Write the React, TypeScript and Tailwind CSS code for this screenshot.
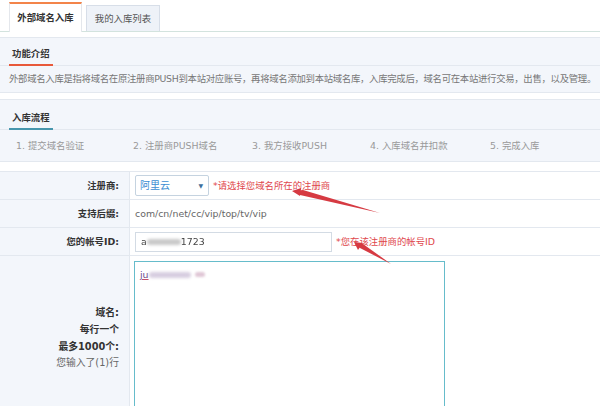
import React from "react";

const FONT = "font-['DejaVu_Sans','Noto_Sans_CJK_SC',sans-serif]";

export default function App() {
  const steps = [
    { t: "1. 提交域名验证", w: "w-[117px]" },
    { t: "2. 注册商PUSH域名", w: "w-[119px]" },
    { t: "3. 我方接收PUSH", w: "w-[118px]" },
    { t: "4. 入库域名并扣款", w: "w-[120px]" },
    { t: "5. 完成入库", w: "w-[100px]" },
  ];
  return (
    <div className={`relative w-[600px] h-[406px] overflow-hidden bg-white text-[9.4px] leading-none text-[#555] ${FONT}`}>
      {/* tabs */}
      <div className="h-[32px] border-b border-[#d3e3de] bg-white flex items-end pl-[9px] gap-[4px] pt-[2px]">
        <div className="h-[30px] w-[73px] -mb-px bg-white border-t-2 border-t-[#f3844a] border-x border-x-[#e4e7ec] flex items-center justify-center text-[#333] font-semibold">
          外部域名入库
        </div>
        <div className="h-[26px] w-[74px] mb-0 bg-[#eef2f8] border border-[#d7dee8] border-b-0 flex items-center justify-center text-[#555]">
          我的入库列表
        </div>
      </div>

      {/* 功能介绍 */}
      <div className="mt-[5px] bg-[#f3f6fb] border-t border-[#e3e8ef] border-b border-b-[#e3e8ef]">
        <div className="h-[28px] border-b border-[#e3e8ef] flex items-end pl-[9px]">
          <div className="h-full flex items-center border-b-2 border-[#e8593a] px-[3px] pt-[4px] -mb-px text-[#333] font-semibold">
            功能介绍
          </div>
        </div>
        <div className="h-[26px] flex items-center pl-[9px] text-[#777] whitespace-nowrap tracking-[-0.3px]">
          外部域名入库是指将域名在原注册商PUSH到本站对应账号，再将域名添加到本站域名库，入库完成后，域名可在本站进行交易，出售，以及管理。
        </div>
      </div>

      {/* 入库流程 */}
      <div className="mt-[6px] bg-[#f3f6fb] border-t border-[#e3e8ef] border-b border-b-[#e3e8ef]">
        <div className="h-[30px] border-b border-[#e3e8ef] flex items-end pl-[9px]">
          <div className="h-full flex items-center border-b-2 border-[#4796ad] px-[3px] pt-[6px] -mb-px text-[#333] font-semibold">
            入库流程
          </div>
        </div>
        <div className="h-[31px] flex items-center pl-[16px] text-[#999] whitespace-nowrap">
          {steps.map((s) => (
            <div key={s.t} className={s.w}>
              {s.t}
            </div>
          ))}
        </div>
      </div>

      {/* form */}
      <div className="mt-[9px] border-t border-[#e3e8ef]">
        <div className="flex h-[28px] border-b border-[#e3e8ef]">
          <div className="w-[130px] shrink-0 bg-[#f3f6fb] border-r border-[#e3e8ef] flex items-center justify-end pr-[10px] font-bold text-[#333]">
            注册商:
          </div>
          <div className="flex items-center pl-[5px]">
            <div className="w-[74px] h-[21px] border border-[#c5d3e0] rounded-[2px] bg-white flex items-center justify-between pl-[4px] pr-[5px]">
              <span className="text-[#3c8ed3] text-[10px]">阿里云</span>
              <span className="text-[#3c6e9c] text-[6px]">▼</span>
            </div>
            <span className="ml-[4px] text-[#e0464c]">*请选择您域名所在的注册商</span>
          </div>
        </div>
        <div className="flex h-[28px] border-b border-[#e3e8ef]">
          <div className="w-[130px] shrink-0 bg-[#f3f6fb] border-r border-[#e3e8ef] flex items-center justify-end pr-[10px] font-bold text-[#333]">
            支持后缀:
          </div>
          <div className="flex items-center pl-[5px] text-[#666]">com/cn/net/cc/vip/top/tv/vip</div>
        </div>
        <div className="flex h-[28px] border-b border-[#e3e8ef]">
          <div className="w-[130px] shrink-0 bg-[#f3f6fb] border-r border-[#e3e8ef] flex items-center justify-end pr-[10px] font-bold text-[#333]">
            您的帐号ID:
          </div>
          <div className="flex items-center pl-[5px]">
            <div className="w-[197px] h-[20px] border border-[#d3dbe4] bg-white flex items-center pl-[5px]">
              <span className="text-[#444] [filter:blur(0.6px)]">a</span>
              <span className="inline-block w-[34px] h-[6px] bg-[#c9c9c9] rounded-full [filter:blur(1.5px)]"></span>
              <span className="text-[#444] [filter:blur(0.5px)]">1723</span>
            </div>
            <span className="ml-[4px] text-[#e0464c]">*您在该注册商的帐号ID</span>
          </div>
        </div>
        <div className="flex h-[160px]">
          <div className="w-[130px] shrink-0 bg-[#f3f6fb] border-r border-[#e3e8ef] flex flex-col items-end justify-center pr-[10px] pt-[4px] gap-[7px] text-[#333] text-[9.8px]">
            <span className="font-bold">域名:</span>
            <span className="font-bold">每行一个</span>
            <span className="font-bold">最多1000个:</span>
            <span className="text-[#666]">您输入了(1)行</span>
          </div>
          <div className="pl-[4px] pt-[5px]">
            <div className="w-[311px] h-[147px] border border-[#66bccb] bg-white pl-[5px] pt-[8px]">
              <span className="inline-flex items-center underline decoration-[#c4506a] text-[#6a4a8a]">
                <span>ju</span>
                <span className="inline-block w-[42px] h-[6px] bg-[#d7cde0] rounded-full [filter:blur(1.5px)]"></span>
                <span className="inline-block w-[10px] h-[5px] ml-[4px] bg-[#e0c7d6] rounded-full [filter:blur(1.2px)]"></span>
              </span>
            </div>
          </div>
        </div>
      </div>

      {/* annotation arrows */}
      <svg className="absolute left-0 top-0 pointer-events-none" width="600" height="406" viewBox="0 0 600 406">
        <polygon points="293,191 303,190 380,213 300,195" fill="#d63a42" />
        <polygon points="292,191 301,188 300,196" fill="#d63a42" />
        <polygon points="355,243 363,244 391,264 360,248" fill="#d63a42" />
        <polygon points="354,242 363,243 358,250" fill="#d63a42" />
      </svg>
    </div>
  );
}
